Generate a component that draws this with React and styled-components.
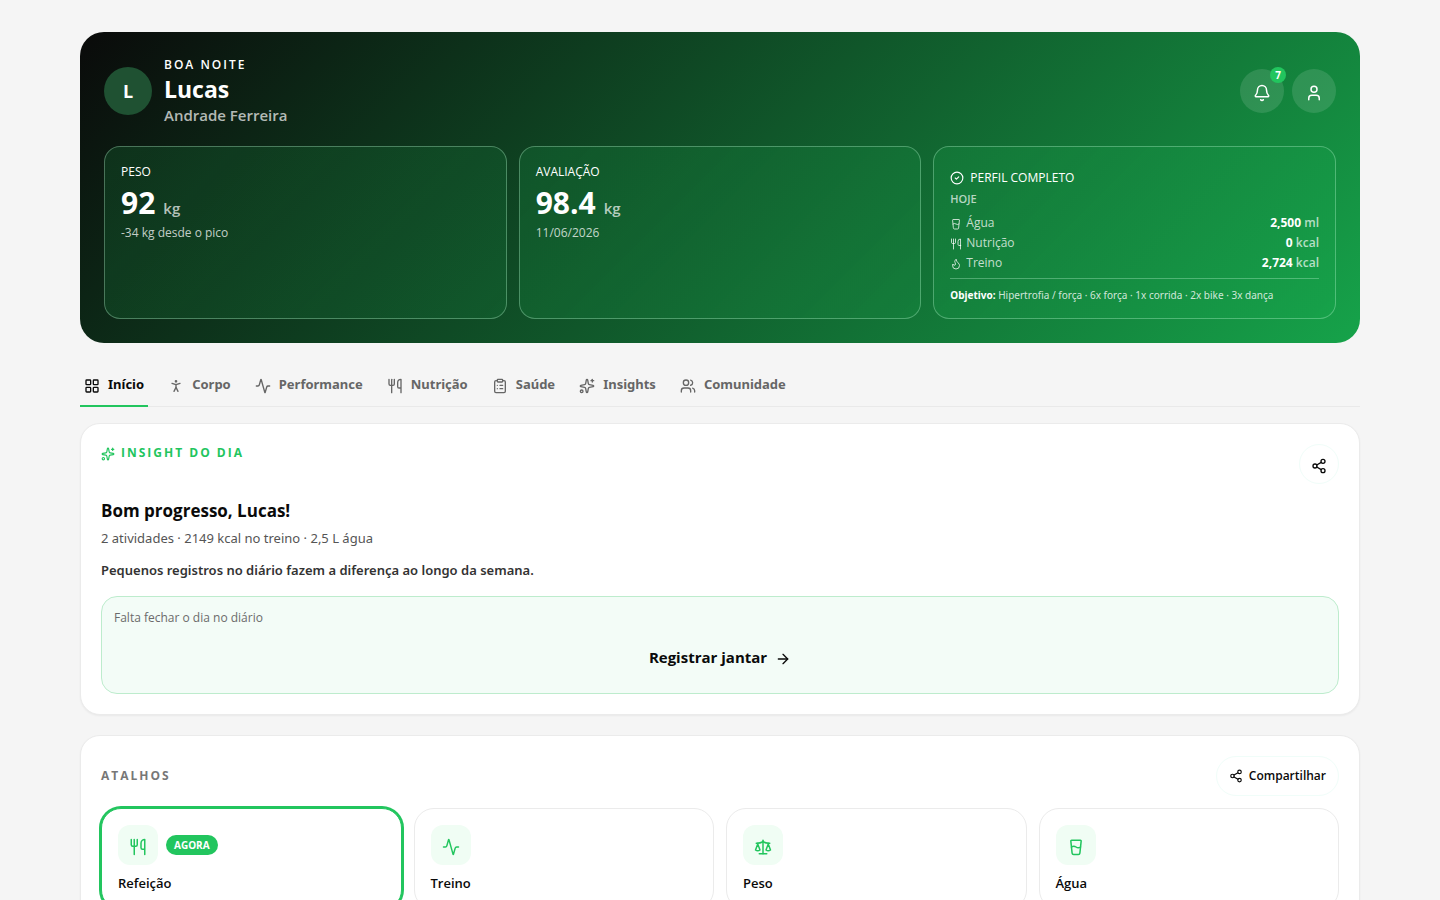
import styled, { createGlobalStyle } from "styled-components";
import {
  Activity,
  ArrowRight,
  Bell,
  CircleCheck,
  ClipboardList,
  Flame,
  GlassWater,
  LayoutGrid,
  PersonStanding,
  Scale,
  Share2,
  Sparkles,
  User,
  Users,
  Utensils,
} from "lucide-react";

const wideFont = `"Segoe UI", "Noto Sans", "Open Sans", sans-serif`;

const GlobalStyle = createGlobalStyle`
  * {
    box-sizing: border-box;
  }

  body {
    margin: 0;
    background: #f5f5f5;
    color: #0a0a0a;
    font-family: "Segoe UI", "Open Sans", "Noto Sans", sans-serif;
    font-size: 14px;
    line-height: 20px;
  }

  h1, h2, h3, p, dl, dd {
    margin: 0;
  }

  button {
    font: inherit;
    color: inherit;
    cursor: pointer;
  }

  svg {
    flex-shrink: 0;
  }
`;

const Page = styled.main`
  max-width: 1344px;
  margin: 0 auto;
  padding: 32px;
`;

const Hero = styled.header`
  padding: 24px;
  border-radius: 24px;
  background: linear-gradient(135deg, #0a0a0a 0%, #16a34a 100%);
  color: #fff;
`;

const HeroTop = styled.div`
  display: flex;
  align-items: center;
  justify-content: space-between;
  margin-bottom: 20px;
`;

const Profile = styled.div`
  display: flex;
  align-items: center;
  gap: 12px;
`;

const Avatar = styled.div`
  display: flex;
  align-items: center;
  justify-content: center;
  width: 48px;
  height: 48px;
  border-radius: 50%;
  background: #1f5132;
  font-size: 18px;
  font-weight: 700;
`;

const Greeting = styled.p`
  font-size: 12px;
  line-height: 18px;
  font-weight: 600;
  letter-spacing: 2px;
  text-transform: uppercase;
`;

const FirstName = styled.h1`
  font-size: 23px;
  line-height: 30px;
  font-weight: 700;
`;

const LastName = styled.p`
  font-size: 15px;
  line-height: 22px;
  font-weight: 600;
  color: rgba(255, 255, 255, 0.7);
`;

const HeroActions = styled.div`
  display: flex;
  gap: 8px;
`;

const RoundButton = styled.button`
  position: relative;
  display: flex;
  align-items: center;
  justify-content: center;
  width: 44px;
  height: 44px;
  padding: 4px 0 0;
  border: none;
  border-radius: 50%;
  background: rgba(255, 255, 255, 0.12);
`;

const Badge = styled.span`
  position: absolute;
  top: -2px;
  right: -2px;
  width: 16px;
  height: 16px;
  border-radius: 50%;
  background: #22c55e;
  font-size: 10px;
  line-height: 16px;
  font-weight: 700;
`;

const Stats = styled.div`
  display: grid;
  grid-template-columns: repeat(3, 1fr);
  gap: 12px;
`;

const StatCard = styled.section`
  padding: 16px;
  border: 1px solid rgba(187, 247, 208, 0.35);
  border-radius: 16px;
  background: linear-gradient(135deg, rgba(34, 197, 94, 0.15), rgba(34, 197, 94, 0.1));
`;

const StatLabel = styled.h2`
  font-size: 12px;
  line-height: 18px;
  font-weight: 400;
  text-transform: uppercase;
`;

const StatValue = styled.p`
  display: flex;
  align-items: baseline;
  gap: 8px;
  margin-top: 5px;
  font-size: 30px;
  line-height: 34px;
  font-weight: 700;
`;

const StatUnit = styled.span`
  font-size: 15px;
  font-weight: 600;
  color: rgba(255, 255, 255, 0.7);
`;

const StatNote = styled.p`
  font-size: 12px;
  line-height: 16px;
  color: rgba(255, 255, 255, 0.75);
`;

const ProfileCard = styled(StatCard)`
  padding: 22px 16px 15px;
`;

const ProfileTitle = styled(StatLabel)`
  display: flex;
  align-items: center;
  gap: 6px;
`;

const Today = styled.p`
  margin: 4px 0 6px;
  font-size: 11px;
  line-height: 16px;
  font-weight: 600;
  color: rgba(255, 255, 255, 0.7);
`;

const DayRow = styled.div`
  display: flex;
  align-items: center;
  justify-content: space-between;
  font-size: 12px;
  line-height: 20px;
`;

const DayName = styled.dt`
  display: flex;
  align-items: center;
  gap: 4px;
  color: rgba(255, 255, 255, 0.75);

  svg {
    margin-top: 2px;
  }
`;

const DayValue = styled.dd`
  font-weight: 700;
`;

const DayUnit = styled.span`
  font-weight: 600;
  color: rgba(255, 255, 255, 0.7);
`;

const Goal = styled.p`
  margin-top: 5px;
  padding-top: 8px;
  border-top: 1px solid rgba(187, 247, 208, 0.35);
  font-family: ${wideFont};
  font-size: 10px;
  line-height: 16px;
  color: rgba(255, 255, 255, 0.8);

  strong {
    color: #fff;
  }
`;

const Tabs = styled.nav`
  display: flex;
  gap: 16px;
  margin: 20px 0 16px;
  border-bottom: 1px solid #e9e9e9;
`;

const Tab = styled.button`
  display: flex;
  align-items: center;
  gap: 8px;
  height: 44px;
  margin-bottom: -1px;
  padding: 0 4px;
  border: none;
  border-bottom: 2px solid ${({ $active }) => ($active ? "#22c55e" : "transparent")};
  background: none;
  font-family: ${wideFont};
  font-size: 13px;
  font-weight: 700;
  color: ${({ $active }) => ($active ? "#0a0a0a" : "#666")};

  svg {
    margin-top: 4px;
  }
`;

const Card = styled.section`
  margin-bottom: 20px;
  padding: 20px;
  border: 1px solid #ebebeb;
  border-radius: 20px;
  background: #fff;
  box-shadow: 0 1px 2px rgba(0, 0, 0, 0.05);
`;

const InsightTop = styled.div`
  display: flex;
  align-items: flex-start;
  justify-content: space-between;
  margin-bottom: 12px;
`;

const Eyebrow = styled.h2`
  display: flex;
  align-items: center;
  gap: 6px;
  font-size: 12px;
  line-height: 16px;
  font-weight: 700;
  letter-spacing: 2px;
  text-transform: uppercase;
  color: ${({ $accent }) => ($accent ? "#22c55e" : "#777")};

  svg {
    margin-top: 3px;
  }
`;

const OutlineButton = styled.button`
  display: flex;
  align-items: center;
  justify-content: center;
  gap: 6px;
  min-width: 40px;
  height: 40px;
  padding: 0 ${({ $round }) => ($round ? "0" : "12px")};
  border: 1px solid #f0fdf9;
  border-radius: 20px;
  background: #fff;
  font-size: 12px;
  font-weight: 600;

  svg {
    margin-top: ${({ $round }) => ($round ? "4px" : "0")};
  }
`;

const InsightTitle = styled.h3`
  font-size: 17px;
  line-height: 30px;
  font-weight: 700;
`;

const InsightFacts = styled.p`
  margin-top: 2px;
  font-family: ${wideFont};
  font-size: 13px;
  color: #555;
`;

const InsightTip = styled.p`
  margin-top: 12px;
  font-family: ${wideFont};
  font-size: 13px;
  font-weight: 600;
  color: #333;
`;

const Callout = styled.div`
  margin-top: 16px;
  padding: 12px;
  border: 1px solid #bdeccd;
  border-radius: 16px;
  background: #f3fcf7;
`;

const CalloutNote = styled.p`
  font-size: 12px;
  line-height: 18px;
  font-weight: 500;
  color: #6b6b6b;
`;

const CalloutButton = styled.button`
  display: flex;
  align-items: center;
  justify-content: center;
  gap: 8px;
  width: 100%;
  height: 48px;
  margin-top: 6px;
  padding: 0;
  border: none;
  background: none;
  font-size: 15px;
  font-weight: 700;

  svg {
    margin-top: 3px;
  }
`;

const ShortcutsTop = styled.div`
  display: flex;
  align-items: center;
  justify-content: space-between;
  margin-bottom: 12px;
`;

const Shortcuts = styled.div`
  display: grid;
  grid-template-columns: repeat(4, 1fr);
  gap: 12px;
`;

const Shortcut = styled.button`
  padding: 16px;
  border: 1px solid ${({ $active }) => ($active ? "#22c55e" : "#ebebeb")};
  border-radius: 20px;
  background: #fff;
  box-shadow: ${({ $active }) => ($active ? "0 0 0 2px #22c55e" : "none")};
  text-align: left;
  font-size: 13px;
  font-weight: 600;
`;

const ShortcutTop = styled.span`
  display: flex;
  align-items: center;
  gap: 8px;
  margin-bottom: 8px;
`;

const ShortcutIcon = styled.span`
  display: flex;
  align-items: center;
  justify-content: center;
  width: 40px;
  height: 40px;
  padding-top: 4px;
  border-radius: 12px;
  background: #f0fdf4;
  color: #22c55e;
`;

const NowTag = styled.span`
  padding: 0 8px;
  border-radius: 10px;
  background: #22c55e;
  color: #fff;
  font-size: 10px;
  line-height: 20px;
  font-weight: 700;
`;

const dayRows = [
  { name: "Água", value: "2,500", unit: "ml", Icon: GlassWater },
  { name: "Nutrição", value: "0", unit: "kcal", Icon: Utensils },
  { name: "Treino", value: "2,724", unit: "kcal", Icon: Flame },
];

const tabs = [
  { label: "Início", Icon: LayoutGrid },
  { label: "Corpo", Icon: PersonStanding },
  { label: "Performance", Icon: Activity },
  { label: "Nutrição", Icon: Utensils },
  { label: "Saúde", Icon: ClipboardList },
  { label: "Insights", Icon: Sparkles },
  { label: "Comunidade", Icon: Users },
];

const shortcuts = [
  { label: "Refeição", Icon: Utensils, now: true },
  { label: "Treino", Icon: Activity },
  { label: "Peso", Icon: Scale },
  { label: "Água", Icon: GlassWater },
];

const App = () => {
  return (
    <>
      <GlobalStyle />
      <Page>
        <Hero>
          <HeroTop>
            <Profile>
              <Avatar>L</Avatar>
              <div>
                <Greeting>Boa noite</Greeting>
                <FirstName>Lucas</FirstName>
                <LastName>Andrade Ferreira</LastName>
              </div>
            </Profile>
            <HeroActions>
              <RoundButton aria-label="Notificações">
                <Bell size={18} strokeWidth={2} />
                <Badge>7</Badge>
              </RoundButton>
              <RoundButton aria-label="Perfil">
                <User size={18} strokeWidth={2} />
              </RoundButton>
            </HeroActions>
          </HeroTop>

          <Stats>
            <StatCard>
              <StatLabel>Peso</StatLabel>
              <StatValue>
                92 <StatUnit>kg</StatUnit>
              </StatValue>
              <StatNote>-34 kg desde o pico</StatNote>
            </StatCard>
            <StatCard>
              <StatLabel>Avaliação</StatLabel>
              <StatValue>
                98.4 <StatUnit>kg</StatUnit>
              </StatValue>
              <StatNote>11/06/2026</StatNote>
            </StatCard>
            <ProfileCard>
              <ProfileTitle>
                <CircleCheck size={14} />
                Perfil completo
              </ProfileTitle>
              <Today>HOJE</Today>
              <dl>
                {dayRows.map(({ name, value, unit, Icon }) => (
                  <DayRow key={name}>
                    <DayName>
                      <Icon size={12} />
                      {name}
                    </DayName>
                    <DayValue>
                      {value} <DayUnit>{unit}</DayUnit>
                    </DayValue>
                  </DayRow>
                ))}
              </dl>
              <Goal>
                <strong>Objetivo:</strong> Hipertrofia / força · 6x força · 1x corrida · 2x bike · 3x dança
              </Goal>
            </ProfileCard>
          </Stats>
        </Hero>

        <Tabs>
          {tabs.map(({ label, Icon }, i) => (
            <Tab key={label} $active={i === 0}>
              <Icon size={16} />
              {label}
            </Tab>
          ))}
        </Tabs>

        <Card>
          <InsightTop>
            <Eyebrow $accent>
              <Sparkles size={14} />
              Insight do dia
            </Eyebrow>
            <OutlineButton $round aria-label="Compartilhar insight">
              <Share2 size={16} />
            </OutlineButton>
          </InsightTop>
          <InsightTitle>Bom progresso, Lucas!</InsightTitle>
          <InsightFacts>2 atividades · 2149 kcal no treino · 2,5 L água</InsightFacts>
          <InsightTip>Pequenos registros no diário fazem a diferença ao longo da semana.</InsightTip>
          <Callout>
            <CalloutNote>Falta fechar o dia no diário</CalloutNote>
            <CalloutButton>
              Registrar jantar
              <ArrowRight size={16} />
            </CalloutButton>
          </Callout>
        </Card>

        <Card>
          <ShortcutsTop>
            <Eyebrow>Atalhos</Eyebrow>
            <OutlineButton>
              <Share2 size={14} />
              Compartilhar
            </OutlineButton>
          </ShortcutsTop>
          <Shortcuts>
            {shortcuts.map(({ label, Icon, now }) => (
              <Shortcut key={label} $active={now}>
                <ShortcutTop>
                  <ShortcutIcon>
                    <Icon size={18} />
                  </ShortcutIcon>
                  {now && <NowTag>AGORA</NowTag>}
                </ShortcutTop>
                {label}
              </Shortcut>
            ))}
          </Shortcuts>
        </Card>
      </Page>
    </>
  );
};

export default App;
